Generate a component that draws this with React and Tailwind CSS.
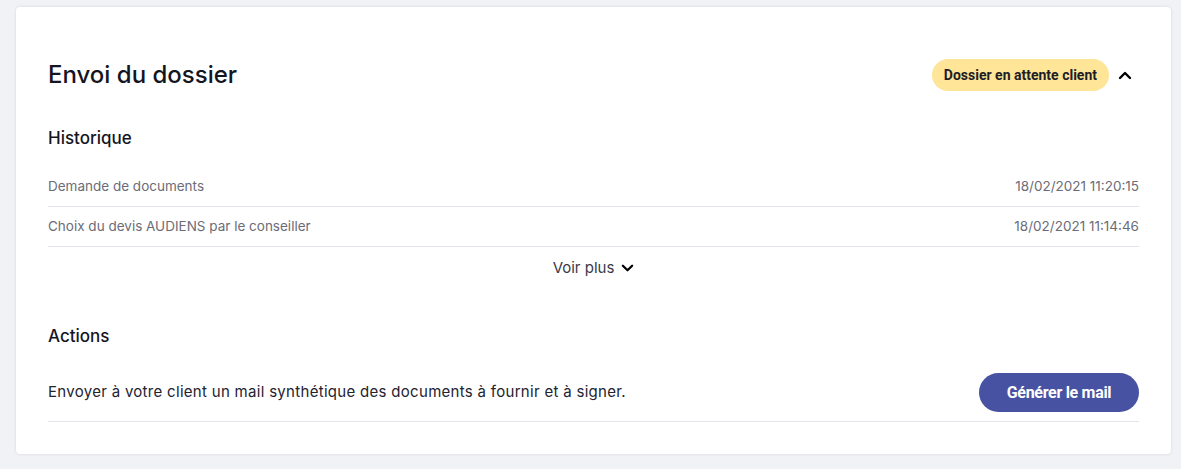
import React from "react";

function ChevronUp({ className }) {
  return (
    <svg viewBox="0 0 14 10" className={className} fill="none" stroke="currentColor" strokeWidth="2.4" strokeLinecap="round" strokeLinejoin="round">
      <polyline points="2,8 7,3 12,8" />
    </svg>
  );
}
function ChevronDown({ className }) {
  return (
    <svg viewBox="0 0 14 10" className={className} fill="none" stroke="currentColor" strokeWidth="2.4" strokeLinecap="round" strokeLinejoin="round">
      <polyline points="2,2.5 7,7.5 12,2.5" />
    </svg>
  );
}

export default function App() {
  const rows = [
    ["Demande de documents", "18/02/2021 11:20:15"],
    ["Choix du devis AUDIENS par le conseiller", "18/02/2021 11:14:46"],
  ];
  return (
    <div className="min-h-[469px] w-[1181px] bg-[#f1f2f6] pl-[16px] pr-[10px] pt-[7px] pb-[14px]" style={{ fontFamily: "Inter, 'Noto Sans', sans-serif" }}>
      <div className="rounded-[4px] bg-white px-[32px] pt-[52px] pb-[32px] shadow-[0_0_3px_rgba(0,0,0,0.12)]">
        <div className="flex h-[32px] items-center justify-between">
          <h1 className="text-[24px] font-medium leading-[32px] text-[#15151f]">Envoi du dossier</h1>
          <div className="flex items-center">
            <span className="flex h-[32px] items-center rounded-full bg-[#fee597] px-[12px] text-[14px] font-bold text-[#1d1d26]" style={{ fontFamily: "Roboto, sans-serif" }}>
              Dossier en attente client
            </span>
            <ChevronUp className="ml-[9px] mr-[7px] h-[10px] w-[14px] text-black" />
          </div>
        </div>

        <h2 className="mt-[35px] text-[17px] font-medium leading-[24px] text-[#15151f]">Historique</h2>
        <div className="mt-[17px]">
          {rows.map(([label, date]) => (
            <div key={label} className="flex h-[40px] items-center justify-between border-b border-[#e4e4ea] text-[13.5px] text-[#6c6c78]">
              <span>{label}</span>
              <span>{date}</span>
            </div>
          ))}
        </div>
        <div className="mt-[10px] flex h-[22px] items-center justify-center gap-[7px] text-[15px] text-[#3a3a48]">
          <span>Voir plus</span>
          <ChevronDown className="h-[10px] w-[13px] text-black" />
        </div>

        <h2 className="mt-[45px] text-[17px] font-medium leading-[24px] text-[#15151f]">Actions</h2>
        <div className="mt-[16px] flex items-center justify-between border-b border-[#e4e4ea] pt-[9px] pb-[9px]">
          <span className="text-[15px] tracking-[0.3px] text-[#23232f]">Envoyer à votre client un mail synthétique des documents à fournir et à signer.</span>
          <button className="h-[39px] w-[160px] rounded-full bg-[#4852a2] text-[16px] font-bold tracking-[-0.3px] text-white" style={{ fontFamily: "Roboto, sans-serif" }}>
            Générer le mail
          </button>
        </div>
      </div>
    </div>
  );
}
